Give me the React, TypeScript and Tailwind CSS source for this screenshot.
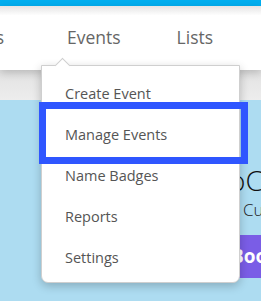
import React from "react";

const items = ["Create Event", "Manage Events", "Name Badges", "Reports", "Settings"];

export default function App() {
  return (
    <div
      className="relative w-[261px] h-[301px] overflow-hidden bg-[#addcf1]"
      style={{ fontFamily: '"Open Sans", "Noto Sans", sans-serif' }}
    >
      {/* top blue strip */}
      <div className="h-[6px] bg-[#00aeef]" />
      {/* nav */}
      <div className="relative z-10 h-[64px] bg-gradient-to-b from-[#e4e4e4] via-white via-[15%] to-white shadow-[0_3px_8px_rgba(0,0,0,0.18)]">
        <div className="flex items-center h-full whitespace-nowrap text-[17.5px] text-[#666] -ml-[52px] pb-[1px]">
          <span className="w-[60px]">Tickets</span>
          <span className="ml-[59px]">Events</span>
          <span className="ml-[56px]">Lists</span>
        </div>
      </div>
      {/* gray band */}
      <div className="h-[30px] bg-gradient-to-b from-[#e2e2e2] to-[#ededed]" />
      {/* hero */}
      <div className="whitespace-nowrap">
        <div className="pl-[229px] pt-[62px] text-[28px] leading-[36px] text-[#111] font-light">oCo</div>
        <div className="pl-[243px] text-[17px] leading-[22px] text-[#222] mt-[1px] font-light">Cu</div>
        <div className="ml-[213px] mt-[14px] h-[43px] bg-[#7a5de6] flex items-center pl-[18px] text-white font-bold text-[19px]">
          Book
        </div>
      </div>

      {/* dropdown */}
      <div className="absolute left-[41px] top-[65px] w-[199px] h-[218px] z-20 bg-white border border-[#cfcfcf] rounded-b-[7px] shadow-[0_3px_10px_rgba(0,0,0,0.22)] pt-[7px]">
        <div className="absolute left-[15px] -top-[6px] w-[11px] h-[11px] bg-white border-l border-t border-[#cfcfcf] rotate-45" />
        {items.map((t) => (
          <div key={t} className="h-[41px] flex items-center pl-[23px] text-[14.5px] text-[#555]">
            {t}
          </div>
        ))}
      </div>

      {/* highlight box */}
      <div className="absolute z-30 left-[39px] top-[102px] w-[209px] h-[62px] border-[7px] border-[#2f56ff]" />
    </div>
  );
}
